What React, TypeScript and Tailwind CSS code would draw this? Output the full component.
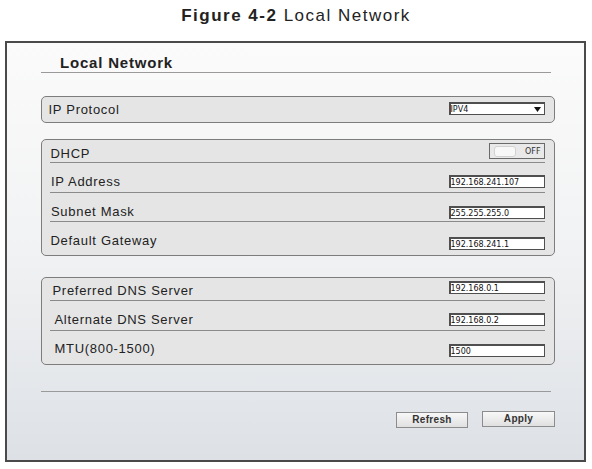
import React from "react";

const font = "font-['Liberation_Sans',Arial,sans-serif]";
const small = "font-['DejaVu_Sans',Verdana,sans-serif]";
const label = "text-[13px] leading-none tracking-[0.7px] text-[#222]";

function Field({ value, className = "" }: { value: string; className?: string }) {
  return (
    <div
      className={`w-[96px] h-[13px] bg-white border-t-2 border-l-2 border-r-[1.5px] border-b-[1.5px] border-[#4f4f4f] flex items-center pt-[1.5px] text-[8px] leading-none text-[#111] ${small} ${className}`}
    >
      {value}
    </div>
  );
}

export default function App() {
  return (
    <div className={`w-[592px] h-[469px] bg-white ${font}`}>
      {/* caption */}
      <div className="pt-[7px] text-center text-[17px] leading-none tracking-[1.5px] text-[#222]">
        <span className="font-bold">Figure 4-2</span> Local Network
      </div>

      {/* frame */}
      <div className="ml-[5px] mt-[17px] w-[581px] h-[421px] border-2 border-[#4a4a4a] bg-linear-to-b from-[#fbfbfb] via-[#f1f2f3] to-[#dde1e6] pl-[34px] pr-[29px]">
        <div className="mr-[4px] pt-[12.3px] pl-[19px] pb-[1.7px] border-b border-[#9a9a9a] text-[15px] leading-none font-bold tracking-[0.8px] text-[#222]">
          Local Network
        </div>

        {/* IP Protocol */}
        <div className="mt-[23px] h-[27px] rounded-[5px] border-[1.5px] border-[#7d7d7d] bg-[#e5e5e5] flex items-start justify-between pl-[6.5px] pr-[9.5px]">
          <span className={`${label} mt-[6.5px]`}>IP Protocol</span>
          <div className={`mt-[5.5px] w-[96px] h-[13px] bg-white border-t-2 border-l-2 border-r-[1.5px] border-b-[1.5px] border-[#4f4f4f] flex items-center justify-between pr-[3px] text-[8px] leading-none text-[#111] ${small}`}>
            <span className="pt-[1.5px]">IPV4</span>
            <svg width="7" height="5" viewBox="0 0 7 5">
              <path d="M0 0 H7 L3.5 5 Z" fill="#111" />
            </svg>
          </div>
        </div>

        {/* DHCP group */}
        <div className="mt-[16px] h-[117px] rounded-[5px] border-[1.5px] border-[#7d7d7d] bg-[#e5e5e5] pl-[7.5px] pr-[9.5px]">
          <div className="h-[23.5px] pt-[3.5px] border-b border-[#8a8a8a] flex items-start justify-between">
            <span className={`${label} ml-[1px] mt-[3.3px]`}>DHCP</span>
            <div className="w-[56px] h-[16px] border-[1.5px] border-[#6a6a6a] bg-[#e9e9e9] flex items-center">
              <div className="ml-[4.5px] w-[22px] h-[11px] rounded-[3px] bg-[#f8f8f8] border border-[#d2d2d2]" />
              <span className={`ml-auto mr-[3px] pt-[1.5px] text-[8px] leading-none text-[#333] ${small}`}>OFF</span>
            </div>
          </div>
          <div className="h-[30px] pt-[12px] border-b border-[#8a8a8a] flex items-start justify-between">
            <span className={`${label} ml-[1.5px]`}>IP Address</span>
            <Field value="192.168.241.107" />
          </div>
          <div className="h-[29px] pt-[11.5px] border-b border-[#8a8a8a] flex items-start justify-between">
            <span className={`${label} ml-[1.5px]`}>Subnet Mask</span>
            <Field value="255.255.255.0" className="mt-[1.5px]" />
          </div>
          <div className="pt-[12px] flex items-start justify-between">
            <span className={`${label} ml-[1px]`}>Default Gateway</span>
            <Field value="192.168.241.1" className="mt-[3px]" />
          </div>
        </div>

        {/* DNS group */}
        <div className="mt-[21px] h-[88px] rounded-[5px] border-[1.5px] border-[#7d7d7d] bg-[#e5e5e5] pl-[7.5px] pr-[9.5px]">
          <div className="h-[23.5px] pt-[3.5px] border-b border-[#8a8a8a] flex items-start justify-between">
            <span className={`${label} ml-[3px] mt-[2.3px]`}>Preferred DNS Server</span>
            <Field value="192.168.0.1" />
          </div>
          <div className="h-[30px] pt-[11.3px] border-b border-[#8a8a8a] flex items-start justify-between">
            <span className={`${label} ml-[5px]`}>Alternate DNS Server</span>
            <Field value="192.168.0.2" className="mt-[0.7px]" />
          </div>
          <div className="pt-[10.6px] flex items-start justify-between">
            <span className={`${label} ml-[5px]`}>MTU(800-1500)</span>
            <Field value="1500" className="mt-[2.4px]" />
          </div>
        </div>

        <div className="mt-[26px] mr-[4px] border-t border-[#9a9a9a]" />

        {/* buttons */}
        <div className="mt-[20px] flex justify-end items-start gap-[14px]">
          <button className="w-[72px] h-[16px] border-[1.5px] border-[#8c8c8c] bg-linear-to-b from-[#f8f8f8] to-[#e0e0e0] text-[10px] leading-none font-bold tracking-[0.3px] text-[#333] flex items-center justify-center">
            Refresh
          </button>
          <button className="-mt-[1px] w-[73px] h-[16px] border-[1.5px] border-[#8c8c8c] bg-linear-to-b from-[#f8f8f8] to-[#e0e0e0] text-[10px] leading-none font-bold tracking-[0.3px] text-[#333] flex items-start justify-center pt-[2px]">
            Apply
          </button>
        </div>
      </div>
    </div>
  );
}
